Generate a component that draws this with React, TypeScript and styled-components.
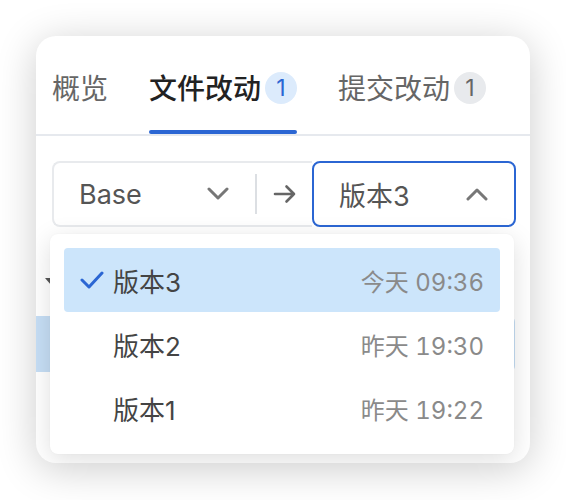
import React from 'react'
import styled, { createGlobalStyle } from 'styled-components'

const GlobalStyle = createGlobalStyle`
  html, body {
    margin: 0;
    background: #ffffff;
  }
  body {
    min-height: 100vh;
    padding: 36px 0 0 36px;
    box-sizing: border-box;
    font-family: Inter, 'Noto Sans CJK SC', sans-serif;
    -webkit-font-smoothing: antialiased;
  }
`

const Card = styled.div`
  position: relative;
  width: 494px;
  height: 427px;
  border-radius: 20px;
  background: #ffffff;
  box-shadow: 0 6px 40px rgba(0, 0, 0, 0.2);
  overflow: hidden;
`

// # Tabs
const TabBar = styled.div`
  display: flex;
  gap: 41px;
  padding: 36px 0 0 16px;
  border-bottom: 2px solid #e6e9ee;
  white-space: nowrap;
`

const Tab = styled.div<{ $active?: boolean }>`
  position: relative;
  display: flex;
  align-items: flex-start;
  gap: 4px;
  height: 62px;
  flex-shrink: 0;
  font-size: 28px;
  line-height: 34px;
  font-weight: ${(p) => (p.$active ? 500 : 400)};
  color: ${(p) => (p.$active ? '#222222' : '#666666')};

  &::after {
    content: '';
    display: ${(p) => (p.$active ? 'block' : 'none')};
    position: absolute;
    left: 0;
    right: 0;
    bottom: 0;
    height: 4px;
    border-radius: 2px;
    background: #2b66d3;
  }
`

const Badge = styled.span<{ $active?: boolean }>`
  display: flex;
  align-items: center;
  justify-content: center;
  width: 32px;
  height: 32px;
  border-radius: 50%;
  font-size: 23px;
  font-weight: 400;
  background: ${(p) => (p.$active ? '#dcebfc' : '#e8eaed')};
  color: ${(p) => (p.$active ? '#2b66d3' : '#666666')};
`

// # Version selector
const SelectorWrap = styled.div`
  position: relative;
  margin: 25px 14px 0 16px;
`

const SelectorRow = styled.div`
  display: flex;
  height: 66px;
`

const BaseGroup = styled.div`
  display: flex;
  align-items: center;
  width: 260px;
  border: 2px solid #e8eaed;
  border-right: none;
  border-radius: 8px 0 0 8px;
  box-sizing: border-box;
`

const Select = styled.div<{ $focused?: boolean }>`
  display: flex;
  align-items: center;
  justify-content: space-between;
  box-sizing: border-box;
  height: 100%;
  padding: 0 26px 0 25px;
  font-size: 27px;
  color: #555555;
  ${(p) =>
    p.$focused
      ? `
    flex: 1;
    border: 2px solid #2b66d3;
    border-radius: 8px;
  `
      : `
    width: 201px;
  `}
`

const Divider = styled.div`
  width: 2px;
  height: 40px;
  background: #dcdfe3;
`

const ArrowSlot = styled.div`
  display: flex;
  align-items: center;
  justify-content: center;
  flex: 1;
  color: #666666;
`

// # Dropdown menu
const Menu = styled.div`
  position: absolute;
  top: calc(100% + 7px);
  left: -2px;
  z-index: 2;
  width: 464px;
  padding: 14px;
  box-sizing: border-box;
  border-radius: 8px;
  background: #ffffff;
  box-shadow: 0 6px 26px rgba(0, 0, 0, 0.13), 0 0 2px rgba(0, 0, 0, 0.04);
`

const MenuItem = styled.div<{ $selected?: boolean }>`
  display: flex;
  align-items: center;
  height: 64px;
  padding: 0 16px;
  border-radius: 4px;
  background: ${(p) => (p.$selected ? '#cce5fb' : 'transparent')};
`

const CheckSlot = styled.span`
  display: flex;
  width: 24px;
  margin-right: 9px;
  color: #2b66d3;
`

const ItemName = styled.span`
  flex: 1;
  font-size: 26px;
  color: #444444;
`

const ItemTime = styled.span`
  font-size: 24px;
  color: #8a8a8a;
  font-variant-numeric: tabular-nums;
`

// # File tree behind the menu
const Tree = styled.div`
  display: flex;
  flex-direction: column;
  gap: 6px;
  margin-top: 27px;
  padding-right: 15px;
`

const TreeRow = styled.div<{ $selected?: boolean }>`
  display: flex;
  align-items: center;
  height: 56px;
  padding-left: 8px;
  border-radius: 0 6px 6px 0;
  background: ${(p) => (p.$selected ? '#c6def5' : 'transparent')};
  color: #555555;
`

const Chevron = ({ up }: { up?: boolean }) => (
  <svg width='22' height='14' viewBox='0 0 22 14' fill='none'>
    <polyline
      points={up ? '2,12 11,3 20,12' : '2,2 11,11 20,2'}
      stroke='#777777'
      strokeWidth='3'
      strokeLinecap='round'
      strokeLinejoin='round'
    />
  </svg>
)

const versions = [
  { name: '版本3', time: '今天 09:36' },
  { name: '版本2', time: '昨天 19:30' },
  { name: '版本1', time: '昨天 19:22' },
]

const App: React.FC = () => {
  const current = '版本3'
  return (
    <>
      <GlobalStyle />
      <Card>
        <TabBar>
          <Tab>概览</Tab>
          <Tab $active>
            文件改动<Badge $active>1</Badge>
          </Tab>
          <Tab>
            提交改动<Badge>1</Badge>
          </Tab>
          <Tab>目录</Tab>
        </TabBar>

        <SelectorWrap>
          <SelectorRow>
            <BaseGroup>
              <Select>
                Base
                <Chevron />
              </Select>
              <Divider />
              <ArrowSlot>
                <svg width='24' height='20' viewBox='0 0 24 20' fill='none'>
                  <path
                    d='M2 10h19M13.5 2.5 21 10l-7.5 7.5'
                    stroke='currentColor'
                    strokeWidth='2.6'
                    strokeLinecap='round'
                    strokeLinejoin='round'
                  />
                </svg>
              </ArrowSlot>
            </BaseGroup>
            <Select $focused>
              {current}
              <Chevron up />
            </Select>
          </SelectorRow>

          <Menu>
            {versions.map((v) => (
              <MenuItem key={v.name} $selected={v.name === current}>
                <CheckSlot>
                  {v.name === current && (
                    <svg width='24' height='20' viewBox='0 0 24 20' fill='none'>
                      <polyline
                        points='2,10 9,17 22,3'
                        stroke='currentColor'
                        strokeWidth='3'
                        strokeLinecap='round'
                        strokeLinejoin='round'
                      />
                    </svg>
                  )}
                </CheckSlot>
                <ItemName>{v.name}</ItemName>
                <ItemTime>{v.time}</ItemTime>
              </MenuItem>
            ))}
          </Menu>
        </SelectorWrap>

        <Tree>
          <TreeRow>
            <svg width='14' height='10' viewBox='0 0 14 10'>
              <path d='M1 1h12L7 8z' fill='currentColor' />
            </svg>
          </TreeRow>
          <TreeRow $selected />
        </Tree>
      </Card>
    </>
  )
}

export default App
